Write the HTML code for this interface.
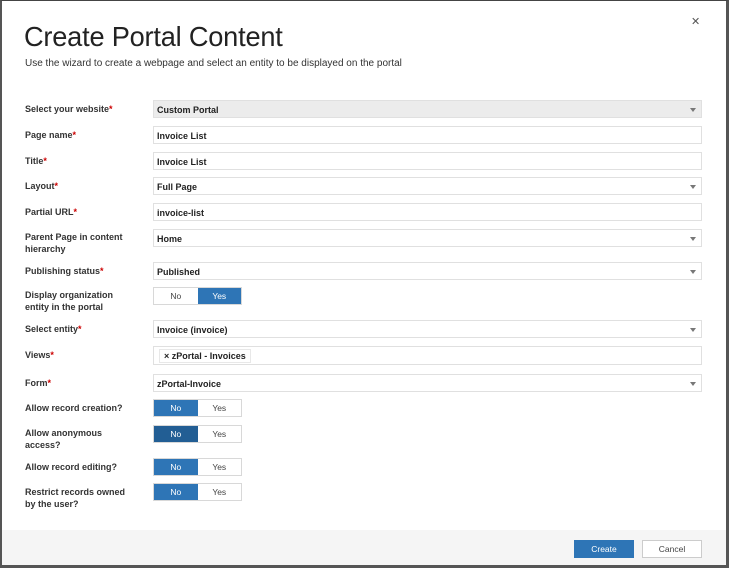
<!DOCTYPE html>
<html><head><meta charset="utf-8"><style>
*{margin:0;padding:0;box-sizing:border-box}
body{width:729px;height:568px;background:#fff;font-family:"Liberation Sans",sans-serif;position:relative;overflow:hidden;color:#222}
.frame{position:absolute;left:0;top:0;width:729px;height:568px;border:1px solid #444;border-left:2px solid #555;border-right:3px solid #555;border-bottom:3px solid #555}
h1{position:absolute;left:24px;top:21px;font-size:28px;font-weight:normal;color:#222;letter-spacing:-0.2px;transform:scaleX(0.97);transform-origin:left}
.sub{position:absolute;left:25px;top:58px;font-size:10px;color:#333}
.x{position:absolute;left:691px;top:15px;font-size:11px;color:#555}
.l{position:absolute;left:25px;font-size:9px;font-weight:bold;color:#333;line-height:12px;width:110px}
.l i{color:#c00;font-style:normal}
.f{position:absolute;left:153px;width:549px;height:18px;border:1px solid #e0e0e0;font-size:9px;font-weight:bold;padding:4px 0 0 3px;color:#222}
.f.g{background:#ececec;border-color:#e0e0e0}
.ar{position:absolute;right:5px;top:7px;width:0;height:0;border-left:3px solid transparent;border-right:3px solid transparent;border-top:4px solid #777}
.t{position:absolute;left:153px;width:89px;height:18px;border:1px solid #d8d8d8;display:flex;font-size:8.5px}
.t span{flex:1;text-align:center;line-height:16px;color:#444}
.t span.on{background:#2e75b6;color:#fff}
.t span.dk{background:#225e94;color:#fff}
.tag{display:inline-block;border:1px solid #e8e8e8;padding:1px 4px;margin-top:-2px;font-weight:bold}
.foot{position:absolute;left:2px;top:530px;width:724px;height:35px;background:#f5f5f5}
.btn{position:absolute;top:540px;width:60px;height:18px;font-size:8.5px;text-align:center;line-height:18px}
</style></head><body>
<div class="foot"></div>
<div class="frame"></div>
<div class="x">✕</div>
<h1>Create Portal Content</h1>
<div class="sub">Use the wizard to create a webpage and select an entity to be displayed on the portal</div>

<div class="l" style="top:103px">Select your website<i>*</i></div>
<div class="f g" style="top:100px">Custom Portal<div class="ar"></div></div>
<div class="l" style="top:129px">Page name<i>*</i></div>
<div class="f" style="top:126px">Invoice List</div>
<div class="l" style="top:155px">Title<i>*</i></div>
<div class="f" style="top:152px">Invoice List</div>
<div class="l" style="top:180px">Layout<i>*</i></div>
<div class="f" style="top:177px">Full Page<div class="ar"></div></div>
<div class="l" style="top:206px">Partial URL<i>*</i></div>
<div class="f" style="top:203px">invoice-list</div>
<div class="l" style="top:231px">Parent Page in content hierarchy</div>
<div class="f" style="top:229px">Home<div class="ar"></div></div>
<div class="l" style="top:265px">Publishing status<i>*</i></div>
<div class="f" style="top:262px">Published<div class="ar"></div></div>
<div class="l" style="top:289px">Display organization entity in the portal</div>
<div class="t" style="top:287px"><span>No</span><span class="on">Yes</span></div>
<div class="l" style="top:323px">Select entity<i>*</i></div>
<div class="f" style="top:320px">Invoice (invoice)<div class="ar"></div></div>
<div class="l" style="top:349px">Views<i>*</i></div>
<div class="f" style="top:346px;height:19px;padding-left:5px"><span class="tag">× zPortal - Invoices</span></div>
<div class="l" style="top:377px">Form<i>*</i></div>
<div class="f" style="top:374px">zPortal-Invoice<div class="ar"></div></div>
<div class="l" style="top:402px">Allow record creation?</div>
<div class="t" style="top:399px"><span class="on">No</span><span>Yes</span></div>
<div class="l" style="top:427px">Allow anonymous access?</div>
<div class="t" style="top:425px"><span class="dk">No</span><span>Yes</span></div>
<div class="l" style="top:461px">Allow record editing?</div>
<div class="t" style="top:458px"><span class="on">No</span><span>Yes</span></div>
<div class="l" style="top:486px">Restrict records owned by the user?</div>
<div class="t" style="top:483px"><span class="on">No</span><span>Yes</span></div>

<div class="btn" style="left:574px;background:#2e75b6;color:#fff">Create</div>
<div class="btn" style="left:642px;background:#fff;border:1px solid #ccc;color:#444;line-height:16px">Cancel</div>
</body></html>
